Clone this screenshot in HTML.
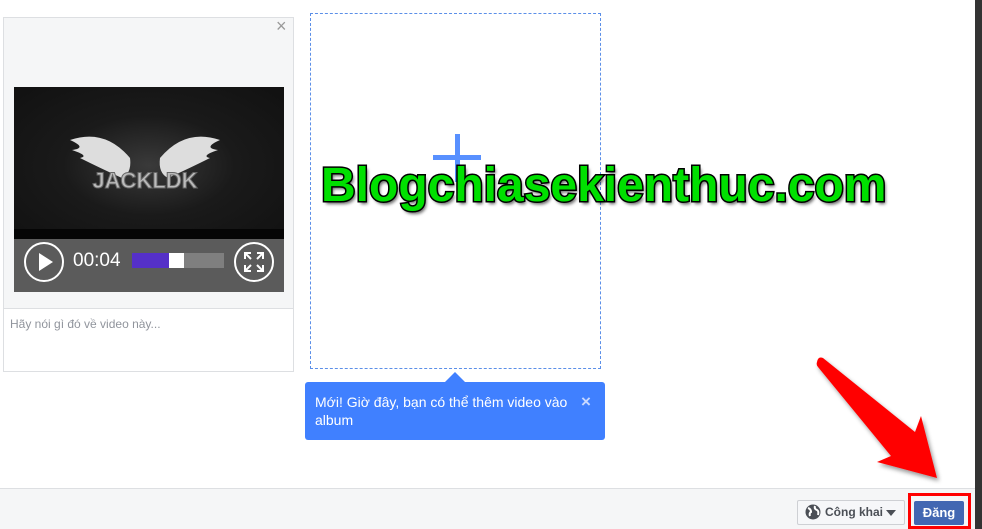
<!DOCTYPE html>
<html><head><meta charset="utf-8"><style>
*{margin:0;padding:0;box-sizing:border-box}
body{width:982px;height:529px;overflow:hidden;background:#fff;font-family:"Liberation Sans",Arial,sans-serif;position:relative}
.abs{position:absolute}
</style></head><body>
<div class="abs" style="left:975px;top:0;width:7px;height:529px;background:#333"></div>

<div class="abs" style="left:3px;top:17px;width:291px;height:355px;background:#f5f6f7;border:1px solid #dddfe2"></div>
<div class="abs" style="left:276px;top:16px;font-size:18px;color:#999">×</div>
<div class="abs" style="left:14px;top:87px;width:270px;height:143px;background:radial-gradient(ellipse at 50% 55%,#3a3a3a 0%,#1a1a1a 45%,#111 100%)"></div>
<svg class="abs" style="left:60px;top:128px" width="170" height="70" viewBox="0 0 170 70">
<path d="M10 12 Q45 0 70 30 Q72 45 62 50 Q40 40 20 30 Q30 28 12 22 Q28 20 10 12Z" fill="#ddd"/>
<path d="M160 12 Q125 0 100 30 Q98 45 108 50 Q130 40 150 30 Q140 28 158 22 Q142 20 160 12Z" fill="#ddd"/>
<text x="85" y="60" text-anchor="middle" font-family="Liberation Sans" font-weight="bold" font-size="22" fill="#bbb" stroke="#666" stroke-width="1">JACKLDK</text>
</svg>
<div class="abs" style="left:14px;top:229px;width:270px;height:10px;background:#050505"></div>
<div class="abs" style="left:14px;top:239px;width:270px;height:53px;background:#5b5b5b"></div>
<div class="abs" style="left:24px;top:242px;width:40px;height:40px;border:2px solid #fff;border-radius:50%"></div>
<svg class="abs" style="left:38px;top:252px" width="16" height="20"><path d="M1 1L15 10L1 19Z" fill="#fff"/></svg>
<div class="abs" style="left:73px;top:250px;font-size:19px;color:#fff">00:04</div>
<div class="abs" style="left:132px;top:253px;width:37px;height:15px;background:#5530c8"></div>
<div class="abs" style="left:169px;top:253px;width:15px;height:15px;background:#fff"></div>
<div class="abs" style="left:184px;top:253px;width:40px;height:15px;background:#7f7f7f"></div>
<div class="abs" style="left:234px;top:242px;width:40px;height:40px;border:2px solid #fff;border-radius:50%"></div>
<svg class="abs" style="left:243px;top:251px" width="22" height="22" stroke="#fff" stroke-width="2" fill="none"><path d="M2 8V2H8M2 2L8 8M20 8V2H14M20 2L14 8M2 14V20H8M2 20L8 14M20 14V20H14M20 20L14 14"/></svg>
<div class="abs" style="left:4px;top:308px;width:289px;height:63px;background:#fff;border-top:1px solid #dddfe2"></div>
<div class="abs" style="left:10px;top:317px;font-size:12px;color:#90949c">Hãy nói gì đó về video này...</div>

<div class="abs" style="left:310px;top:13px;width:291px;height:356px;border:1px dashed #5b8fe8"></div>
<div class="abs" style="left:433px;top:155px;width:48px;height:5px;background:#5890ff"></div>
<div class="abs" style="left:455px;top:134px;width:5px;height:48px;background:#5890ff"></div>

<svg class="abs" style="left:443px;top:372px" width="24" height="12"><path d="M0 12L12 0L24 12Z" fill="#4080ff"/></svg>
<div class="abs" style="left:305px;top:382px;width:300px;height:58px;background:#4080ff;border-radius:3px"></div>
<div class="abs" style="left:315px;top:393px;width:260px;font-size:14px;line-height:18px;color:#fff">Mới! Giờ đây, bạn có thể thêm video vào album</div>
<div class="abs" style="left:581px;top:392px;font-size:17px;font-weight:bold;color:#c8d8ff">×</div>

<div class="abs" style="left:321px;top:157px;font-size:48px;font-weight:bold;color:#00e000;-webkit-text-stroke:3px #000;paint-order:stroke fill;text-shadow:2px 3px 3px rgba(0,0,0,.6);letter-spacing:0px;white-space:nowrap;line-height:58px">Blogchiasekienthuc.com</div>

<div class="abs" style="left:0;top:488px;width:975px;height:41px;background:#f5f6f7;border-top:1px solid #dddfe2"></div>
<div class="abs" style="left:797px;top:500px;width:108px;height:25px;background:#f6f7f9;border:1px solid #ced0d4;border-radius:2px"></div>
<svg class="abs" style="left:805px;top:504px" width="16" height="16"><circle cx="8" cy="8" r="7.5" fill="#4b4f56"/><path d="M3 4Q6 5 6 8Q4 9 5 12M10 2Q9 5 12 6Q14 7 13 11" stroke="#fff" stroke-width="2" fill="none"/></svg>
<div class="abs" style="left:825px;top:505px;font-size:12px;font-weight:bold;color:#4b4f56">Công khai</div>
<svg class="abs" style="left:886px;top:510px" width="10" height="6"><path d="M0 0H10L5 6Z" fill="#4b4f56"/></svg>
<div class="abs" style="left:908px;top:493px;width:63px;height:36px;border:3px solid #f00"></div>
<div class="abs" style="left:914px;top:501px;width:50px;height:24px;background:#4267b2;border-radius:2px;color:#fff;font-size:13px;font-weight:bold;text-align:center;line-height:24px">Đăng</div>

<svg class="abs" style="left:0;top:0" width="982" height="529">
<defs><filter id="s"><feDropShadow dx="2" dy="3" stdDeviation="2" flood-opacity=".4"/></filter></defs>
<path d="M817 362 Q818 356 823 358 L915 432 L921 416 L937 478 L877 462 L891 456 L818 367 Q816 365 817 362Z" fill="#f00" filter="url(#s)"/>
</svg>
</body></html>
